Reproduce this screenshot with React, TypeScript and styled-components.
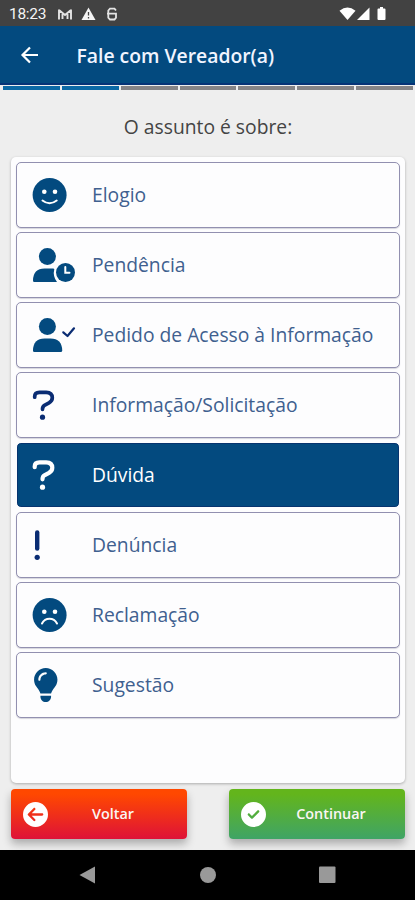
import React from "react";
import styled, { createGlobalStyle } from "styled-components";
import { FaLightbulb, FaCircleArrowLeft, FaCircleCheck } from "react-icons/fa6";

const Global = createGlobalStyle`
  * { box-sizing: border-box; }
  body { margin: 0; background: #eeeeee; font-family: "Open Sans", sans-serif; }
`;

const Screen = styled.div`
  width: 415px;
  height: 900px;
  display: flex;
  flex-direction: column;
  background: #eeeeee;
  overflow: hidden;
`;

const StatusBar = styled.div`
  height: 26px;
  flex: none;
  display: flex;
  align-items: center;
  padding: 1px 27px 0 9px;
  background: #424242;
  color: #f4f4f4;
`;

const Clock = styled.span`
  width: 48px;
  font: 400 15.5px/20px Roboto, sans-serif;
  letter-spacing: -0.3px;
`;

const StatusIcons = styled.svg`
  display: block;
`;

const Signals = styled(StatusIcons)`
  margin-left: auto;
`;

const AppBar = styled.header`
  height: 59px;
  flex: none;
  display: flex;
  align-items: center;
  padding-left: 20px;
  background: #034a7f;
  border-bottom: 2px solid #063477;
`;

const Title = styled.h1`
  margin: 2px 0 0 36.5px;
  color: #f1f5ff;
  font-size: 19.35px;
  line-height: 26px;
  font-weight: 600;
  white-space: nowrap;
`;

const Steps = styled.div`
  flex: none;
  display: grid;
  grid-template-columns: repeat(7, 1fr);
  gap: 2px;
  padding: 1px 2px 0 3px;
`;

const Step = styled.div<{ $done: boolean }>`
  height: 4px;
  background: ${(p) => (p.$done ? "#0c69a5" : "#858487")};
`;

const Prompt = styled.p`
  flex: none;
  height: 67px;
  margin: 0;
  padding: 24px 0 0 1px;
  text-align: center;
  color: #444444;
  font-size: 19.3px;
  line-height: 26px;
  font-weight: 400;
`;

const Panel = styled.main`
  flex: none;
  height: 626px;
  margin: 0 10px 0 11px;
  padding: 5px 5px 0;
  display: flex;
  flex-direction: column;
  gap: 4px;
  background: #fdfdfe;
  border-radius: 5px;
  box-shadow: 0 1px 3px rgba(0, 0, 0, 0.28);
`;

const Option = styled.button<{ $selected: boolean }>`
  flex: none;
  height: 66px;
  display: flex;
  align-items: center;
  padding: 0 0 0 15px;
  border: 1px solid ${(p) => (p.$selected ? "#fdfdfe" : "#9290b0")};
  border-radius: 5px;
  color: ${(p) => (p.$selected ? "#ffffff" : "#034a7f")};
  background: ${(p) => (p.$selected ? "#034a7f" : "#fdfdfe")};
  background-clip: padding-box;
  box-shadow: ${(p) => (p.$selected ? "inset 0 0 0 1px #07346f" : "0 1px 1px #d5d5dd")};
  text-align: left;
`;

const OptionIcon = styled.span<{ $dark: boolean }>`
  width: 60px;
  flex: none;
  display: flex;
  align-items: center;
  color: ${(p) => (p.$dark ? "#0a2c73" : "inherit")};
`;

const OptionLabel = styled.span<{ $selected: boolean }>`
  font: 400 19.3px/28px "Open Sans", sans-serif;
  color: ${(p) => (p.$selected ? "#ffffff" : "#40608f")};
  white-space: nowrap;
`;

const Actions = styled.div`
  flex: none;
  height: 67px;
  display: flex;
  justify-content: space-between;
  padding: 6px 10px 0 11px;
`;

const ActionButton = styled.button<{ $from: string; $to: string }>`
  width: 176px;
  height: 50px;
  display: flex;
  align-items: center;
  padding: 0 0 0 12px;
  border: 0;
  border-radius: 4px;
  color: #ffffff;
  background: linear-gradient(${(p) => p.$from} 10%, ${(p) => p.$to});
  box-shadow: 0 5px 9px rgba(0, 0, 0, 0.28);
`;

const ActionLabel = styled.span`
  flex: 1;
  padding-right: 9px;
  text-align: center;
  font: 600 14.4px/20px "Open Sans", sans-serif;
  color: #fbf6f4;
`;

const NavBar = styled.nav`
  height: 50px;
  flex: none;
  display: grid;
  grid-template-columns: repeat(3, 120px);
  justify-content: center;
  align-items: center;
  justify-items: center;
  background: #000000;
`;

const Face = ({ mouth }: { mouth: string }) => (
  <svg width="36" height="34" viewBox="0 0 36 34">
    <circle cx="17.6" cy="17" r="17" fill="currentColor" />
    <circle cx="12.300" cy="13.800" r="2.300" fill="#fff" />
    <circle cx="23" cy="13.800" r="2.300" fill="#fff" />
    <path d={mouth} fill="none" stroke="#fff" strokeWidth="2" strokeLinecap="round" />
  </svg>
);

const Person = ({ children, body }: { children: React.ReactNode; body: string }) => (
  <svg width="44" height="34" viewBox="0 0 44 34" fill="currentColor">
    <circle cx="15.400" cy="8.500" r="8.500" />
    <path d={body} />
    {children}
  </svg>
);

const PersonClock = () => (
  <Person body="M1 32.500Q1.200 20.500 12.500 20.500H21Q22.300 20.500 22.300 21.300Q20.500 28 25 34H2.300Q1 34 1 32.500z">
    <circle cx="33.500" cy="24.500" r="9.500" />
    <path d="M33.300 19v5.800h4.200" fill="none" stroke="#fff" strokeWidth="2" strokeLinecap="round" />
  </Person>
);

const PersonCheck = () => (
  <Person body="M1 32.500Q1.200 20.500 12.500 20.500H18.500Q30 20.500 30.200 32.500Q30.200 34 28.800 34H2.300Q1 34 1 32.500z">
    <path
      d="m31.300 14.300 4.200 3.700L42 10.300"
      fill="none"
      stroke="#0a2c73"
      strokeWidth="2.200"
      strokeLinecap="round"
      strokeLinejoin="round"
    />
  </Person>
);

const Question = ({ weight }: { weight: number }) => (
  <svg width="24" height="34" viewBox="0 0 24 34">
    <path
      d="M2.700 9.200V8.500Q2.700 4.300 7.500 4.300H14.200Q20.300 4.500 20.300 9.800Q20.300 13 17 14.900L12.400 17.300Q10.500 18.400 10.500 21.300"
      fill="none"
      stroke="currentColor"
      strokeWidth={weight}
      strokeLinecap="round"
      strokeLinejoin="round"
    />
    <circle cx="10.500" cy="29.200" r="2.600" fill="currentColor" />
  </svg>
);

const Exclamation = () => (
  <svg width="12" height="34" viewBox="0 0 12 34">
    <path d="M5.200 4.500V20.500" stroke="currentColor" strokeWidth="4.400" strokeLinecap="round" />
    <circle cx="5.200" cy="29.300" r="2.600" fill="currentColor" />
  </svg>
);

const Bulb = styled(FaLightbulb)`
  width: 25.5px;
  height: 34px;
  margin-left: 0.9px;
`;

type Choice = { label: string; icon: React.ReactNode; dark?: boolean; selected?: boolean };

const choices: Choice[] = [
  { label: "Elogio", icon: <Face mouth="M10.500 22.500Q17.500 28 24.700 22.500" /> },
  { label: "Pendência", icon: <PersonClock /> },
  { label: "Pedido de Acesso à Informação", icon: <PersonCheck /> },
  { label: "Informação/Solicitação", icon: <Question weight={3.7} />, dark: true },
  { label: "Dúvida", icon: <Question weight={4.2} />, selected: true },
  { label: "Denúncia", icon: <Exclamation />, dark: true },
  { label: "Reclamação", icon: <Face mouth="M10 25.500Q12.500 20.800 17.500 20.800T25 25.500" /> },
  { label: "Sugestão", icon: <Bulb /> },
];

export default function App() {
  return (
    <>
      <Global />
      <Screen>
        <StatusBar>
          <Clock>18:23</Clock>
          <StatusIcons width="64" height="16" viewBox="0 0 64 16" fill="none" stroke="#e4e4e4">
            <path d="M2 13.500V3.500M14 13.500V3.500M2 4l6 5 6-5M5.500 13V8M10.500 13V8" strokeWidth="1.900" />
            <path d="M31.500 1.500 38.500 14h-14z" fill="#f4f4f4" stroke="none" />
            <path d="M31.500 6v3.500M31.500 11v1.500" stroke="#424242" strokeWidth="1.300" />
            <path d="M59 4.500 57.500 2.700H53L51.300 4.500V11.700L53 13.500h4.500L59 11.700V7.700H50" strokeWidth="1.800" />
          </StatusIcons>
          <Signals width="49" height="16" viewBox="0 0 49 16" fill="#ffffff">
            <path d="M0.500 4.800Q8.500 -2 16.500 4.800L8.500 14z" />
            <path d="M30.500 1.500V14H18z" />
            <path d="M41 1h3v1.500h1.500q1 0 1 1V13q0 1-1 1h-6q-1 0-1-1V3.500q0-1 1-1H41z" />
          </Signals>
        </StatusBar>
        <AppBar>
          <svg width="20" height="20" viewBox="0 0 20 20" fill="none" stroke="#fff" strokeWidth="2.200">
            <path d="M18 10H3M10 2.500 2.500 10l7.500 7.500" />
          </svg>
          <Title>Fale com Vereador(a)</Title>
        </AppBar>
        <Steps>
          {[0, 1, 2, 3, 4, 5, 6].map((n) => (
            <Step key={n} $done={n < 2} />
          ))}
        </Steps>
        <Prompt>O assunto é sobre:</Prompt>
        <Panel>
          {choices.map(({ label, icon, dark = false, selected = false }) => (
            <Option key={label} $selected={selected}>
              <OptionIcon $dark={dark}>{icon}</OptionIcon>
              <OptionLabel $selected={selected}>{label}</OptionLabel>
            </Option>
          ))}
        </Panel>
        <Actions>
          <ActionButton $from="#ff4800" $to="#de1238">
            <FaCircleArrowLeft size={25} />
            <ActionLabel>Voltar</ActionLabel>
          </ActionButton>
          <ActionButton $from="#63b51c" $to="#3fa466">
            <FaCircleCheck size={25} />
            <ActionLabel>Continuar</ActionLabel>
          </ActionButton>
        </Actions>
        <NavBar>
          <svg width="18" height="18" viewBox="0 0 18 18" fill="#999">
            <path d="M16 .500v17L.500 9z" />
          </svg>
          <svg width="18" height="18" viewBox="0 0 18 18" fill="#999">
            <circle cx="9" cy="9" r="8" />
          </svg>
          <svg width="18" height="18" viewBox="0 0 18 18" fill="#999">
            <rect x="0" y=".500" width="16.500" height="16.500" rx="1" />
          </svg>
        </NavBar>
      </Screen>
    </>
  );
}
